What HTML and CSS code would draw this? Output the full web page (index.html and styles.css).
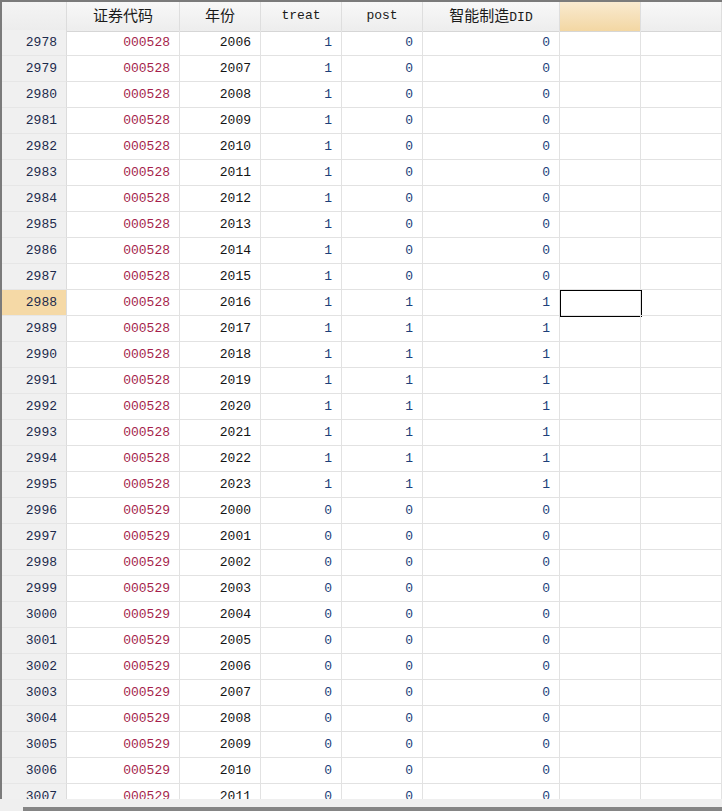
FILE: index.html
```html
<!DOCTYPE html>
<html>
<head>
<meta charset="utf-8">
<link rel="stylesheet" href="styles.css">
</head>
<body>
<div class="sheet">
  <div class="row head">
    <div class="c rh"></div>
    <div class="c h cjk">证券代码</div>
    <div class="c h cjk">年份</div>
    <div class="c h">treat</div>
    <div class="c h">post</div>
    <div class="c h cjk">智能制造<span class="mono">DID</span></div>
    <div class="c h hsel"></div>
    <div class="c h"></div>
  </div>
  <div class="body">
    <div class="row"><div class="c rh">2978</div><div class="c s">000528</div><div class="c y">2006</div><div class="c n">1</div><div class="c n">0</div><div class="c n">0</div><div class="c"></div><div class="c"></div></div>
    <div class="row"><div class="c rh">2979</div><div class="c s">000528</div><div class="c y">2007</div><div class="c n">1</div><div class="c n">0</div><div class="c n">0</div><div class="c"></div><div class="c"></div></div>
    <div class="row"><div class="c rh">2980</div><div class="c s">000528</div><div class="c y">2008</div><div class="c n">1</div><div class="c n">0</div><div class="c n">0</div><div class="c"></div><div class="c"></div></div>
    <div class="row"><div class="c rh">2981</div><div class="c s">000528</div><div class="c y">2009</div><div class="c n">1</div><div class="c n">0</div><div class="c n">0</div><div class="c"></div><div class="c"></div></div>
    <div class="row"><div class="c rh">2982</div><div class="c s">000528</div><div class="c y">2010</div><div class="c n">1</div><div class="c n">0</div><div class="c n">0</div><div class="c"></div><div class="c"></div></div>
    <div class="row"><div class="c rh">2983</div><div class="c s">000528</div><div class="c y">2011</div><div class="c n">1</div><div class="c n">0</div><div class="c n">0</div><div class="c"></div><div class="c"></div></div>
    <div class="row"><div class="c rh">2984</div><div class="c s">000528</div><div class="c y">2012</div><div class="c n">1</div><div class="c n">0</div><div class="c n">0</div><div class="c"></div><div class="c"></div></div>
    <div class="row"><div class="c rh">2985</div><div class="c s">000528</div><div class="c y">2013</div><div class="c n">1</div><div class="c n">0</div><div class="c n">0</div><div class="c"></div><div class="c"></div></div>
    <div class="row"><div class="c rh">2986</div><div class="c s">000528</div><div class="c y">2014</div><div class="c n">1</div><div class="c n">0</div><div class="c n">0</div><div class="c"></div><div class="c"></div></div>
    <div class="row"><div class="c rh">2987</div><div class="c s">000528</div><div class="c y">2015</div><div class="c n">1</div><div class="c n">0</div><div class="c n">0</div><div class="c"></div><div class="c"></div></div>
    <div class="row"><div class="c rh rsel">2988</div><div class="c s">000528</div><div class="c y">2016</div><div class="c n">1</div><div class="c n">1</div><div class="c n">1</div><div class="c csel"></div><div class="c"></div></div>
    <div class="row"><div class="c rh">2989</div><div class="c s">000528</div><div class="c y">2017</div><div class="c n">1</div><div class="c n">1</div><div class="c n">1</div><div class="c"></div><div class="c"></div></div>
    <div class="row"><div class="c rh">2990</div><div class="c s">000528</div><div class="c y">2018</div><div class="c n">1</div><div class="c n">1</div><div class="c n">1</div><div class="c"></div><div class="c"></div></div>
    <div class="row"><div class="c rh">2991</div><div class="c s">000528</div><div class="c y">2019</div><div class="c n">1</div><div class="c n">1</div><div class="c n">1</div><div class="c"></div><div class="c"></div></div>
    <div class="row"><div class="c rh">2992</div><div class="c s">000528</div><div class="c y">2020</div><div class="c n">1</div><div class="c n">1</div><div class="c n">1</div><div class="c"></div><div class="c"></div></div>
    <div class="row"><div class="c rh">2993</div><div class="c s">000528</div><div class="c y">2021</div><div class="c n">1</div><div class="c n">1</div><div class="c n">1</div><div class="c"></div><div class="c"></div></div>
    <div class="row"><div class="c rh">2994</div><div class="c s">000528</div><div class="c y">2022</div><div class="c n">1</div><div class="c n">1</div><div class="c n">1</div><div class="c"></div><div class="c"></div></div>
    <div class="row"><div class="c rh">2995</div><div class="c s">000528</div><div class="c y">2023</div><div class="c n">1</div><div class="c n">1</div><div class="c n">1</div><div class="c"></div><div class="c"></div></div>
    <div class="row"><div class="c rh">2996</div><div class="c s">000529</div><div class="c y">2000</div><div class="c n">0</div><div class="c n">0</div><div class="c n">0</div><div class="c"></div><div class="c"></div></div>
    <div class="row"><div class="c rh">2997</div><div class="c s">000529</div><div class="c y">2001</div><div class="c n">0</div><div class="c n">0</div><div class="c n">0</div><div class="c"></div><div class="c"></div></div>
    <div class="row"><div class="c rh">2998</div><div class="c s">000529</div><div class="c y">2002</div><div class="c n">0</div><div class="c n">0</div><div class="c n">0</div><div class="c"></div><div class="c"></div></div>
    <div class="row"><div class="c rh">2999</div><div class="c s">000529</div><div class="c y">2003</div><div class="c n">0</div><div class="c n">0</div><div class="c n">0</div><div class="c"></div><div class="c"></div></div>
    <div class="row"><div class="c rh">3000</div><div class="c s">000529</div><div class="c y">2004</div><div class="c n">0</div><div class="c n">0</div><div class="c n">0</div><div class="c"></div><div class="c"></div></div>
    <div class="row"><div class="c rh">3001</div><div class="c s">000529</div><div class="c y">2005</div><div class="c n">0</div><div class="c n">0</div><div class="c n">0</div><div class="c"></div><div class="c"></div></div>
    <div class="row"><div class="c rh">3002</div><div class="c s">000529</div><div class="c y">2006</div><div class="c n">0</div><div class="c n">0</div><div class="c n">0</div><div class="c"></div><div class="c"></div></div>
    <div class="row"><div class="c rh">3003</div><div class="c s">000529</div><div class="c y">2007</div><div class="c n">0</div><div class="c n">0</div><div class="c n">0</div><div class="c"></div><div class="c"></div></div>
    <div class="row"><div class="c rh">3004</div><div class="c s">000529</div><div class="c y">2008</div><div class="c n">0</div><div class="c n">0</div><div class="c n">0</div><div class="c"></div><div class="c"></div></div>
    <div class="row"><div class="c rh">3005</div><div class="c s">000529</div><div class="c y">2009</div><div class="c n">0</div><div class="c n">0</div><div class="c n">0</div><div class="c"></div><div class="c"></div></div>
    <div class="row"><div class="c rh">3006</div><div class="c s">000529</div><div class="c y">2010</div><div class="c n">0</div><div class="c n">0</div><div class="c n">0</div><div class="c"></div><div class="c"></div></div>
    <div class="row"><div class="c rh">3007</div><div class="c s">000529</div><div class="c y">2011</div><div class="c n">0</div><div class="c n">0</div><div class="c n">0</div><div class="c"></div><div class="c"></div></div>
  </div>
</div>
<div class="hscroll"><div class="thumb"></div></div>
</body>
</html>
```

FILE: styles.css
```css
* { box-sizing: border-box; }
html, body { margin: 0; padding: 0; background: #ffffff; }
body {
  width: 722px;
  height: 811px;
  overflow: hidden;
  font-family: "Liberation Mono", "Courier New", monospace;
  font-size: 13px;
  color: #111111;
}
.sheet {
  height: 799px;
  overflow: hidden;
  border-top: 2px solid #7b7b7b;
  border-left: 2px solid #7b7b7b;
  background: #ffffff;
}
.row {
  display: grid;
  grid-template-columns: 65px 113px 81px 81px 81px 137px 81px 81px;
  height: 26px;
}
.row.head { height: 28px; }
.c {
  position: relative;
  border-right: 1px solid #e2e2e2;
  border-bottom: 1px solid #e2e2e2;
  text-align: right;
  padding-right: 9px;
  line-height: 25px;
  white-space: nowrap;
}
.head .c {
  line-height: 28px;
  text-align: center;
  padding: 0;
  background: linear-gradient(#f8f8f8, #ededed);
  border-right-color: #dedede;
  border-bottom-color: #d6d6d6;
  color: #1a1a1a;
}
.head .cjk {
  font-family: "Noto Sans CJK SC", "Noto Sans", sans-serif;
  font-size: 15px;
  line-height: 26px;
}
.head .mono {
  font-family: "Liberation Mono", monospace;
  font-size: 13px;
}
.head .hsel { background: linear-gradient(#f9ead0, #f3d7a3); }
.c.rh {
  background: #f0f0f0;
  color: #1c2a4c;
  border-right-color: #dcdcdc;
  border-bottom-color: #e6e6e6;
}
.head .c.rh { background: linear-gradient(#f4f4f4, #ececec); }
.c.rsel { background: #f5d9a6; }
.s { color: #a51f4c; }
.y { color: #141414; }
.n { color: #1d3f7a; }
.csel::after {
  content: "";
  position: absolute;
  left: 0;
  top: 0;
  width: 80px;
  height: 25px;
  border: 1px solid #000000;
}
.hscroll {
  height: 12px;
  background: #efefef;
  position: relative;
}
.thumb {
  position: absolute;
  left: 23px;
  right: 0;
  bottom: 0;
  height: 4px;
  background: #858585;
}
```
